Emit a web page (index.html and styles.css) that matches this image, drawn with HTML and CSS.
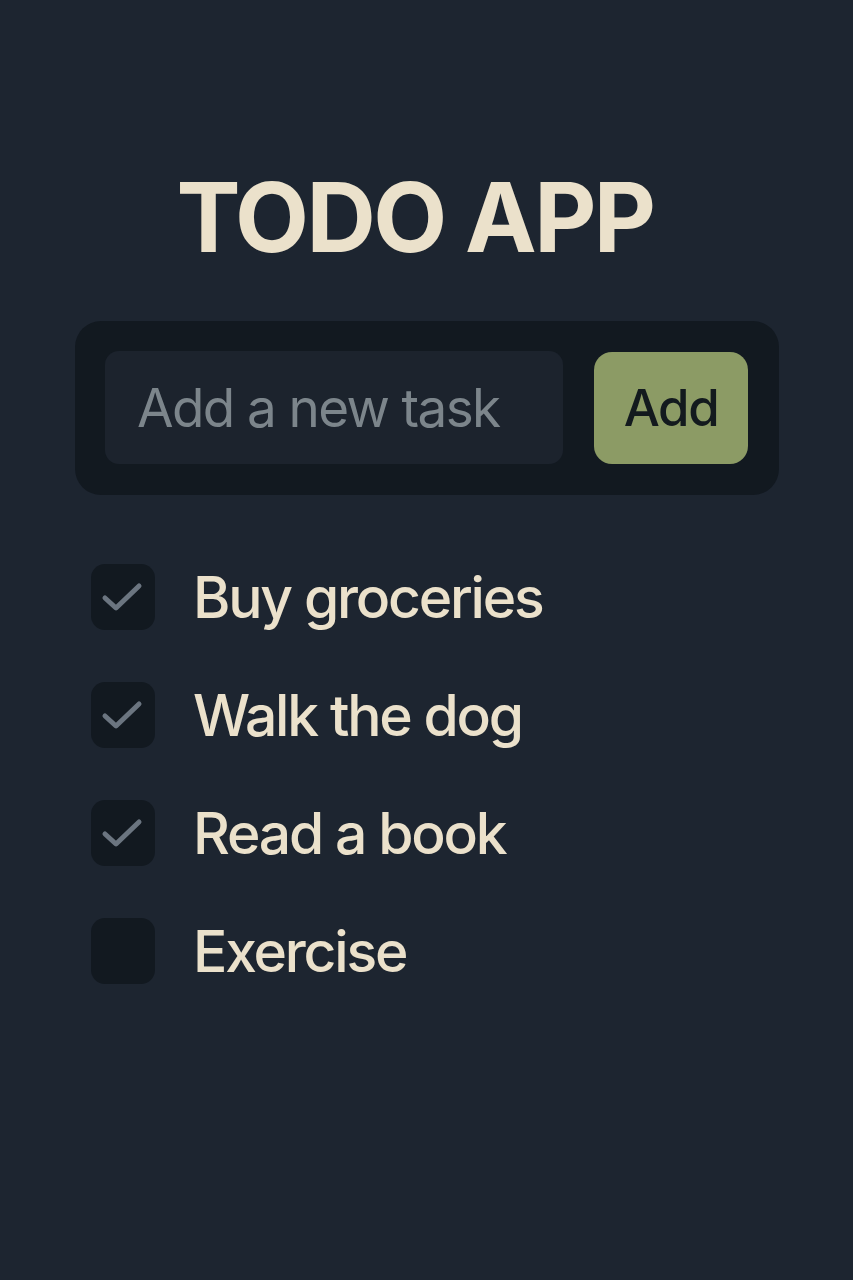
FILE: index.html
```html
<!DOCTYPE html>
<html>
<head>
<meta charset="utf-8">
<link rel="stylesheet" href="styles.css">
</head>
<body>
<main class="app">
  <h1 class="title">TODO APP</h1>
  <form class="composer">
    <div class="field">Add a new task</div>
    <button type="button" class="add">Add</button>
  </form>
  <ul class="tasks">
    <li class="task">
      <span class="box"><svg viewBox="0 0 64 64" width="64" height="64"><path d="M14 33 L25 43 L48 21" fill="none" stroke="#6b7580" stroke-width="5" stroke-linecap="round" stroke-linejoin="round"/></svg></span>
      <span class="label">Buy groceries</span>
    </li>
    <li class="task">
      <span class="box"><svg viewBox="0 0 64 64" width="64" height="64"><path d="M14 33 L25 43 L48 21" fill="none" stroke="#6b7580" stroke-width="5" stroke-linecap="round" stroke-linejoin="round"/></svg></span>
      <span class="label">Walk the dog</span>
    </li>
    <li class="task">
      <span class="box"><svg viewBox="0 0 64 64" width="64" height="64"><path d="M14 33 L25 43 L48 21" fill="none" stroke="#6b7580" stroke-width="5" stroke-linecap="round" stroke-linejoin="round"/></svg></span>
      <span class="label">Read a book</span>
    </li>
    <li class="task">
      <span class="box"></span>
      <span class="label">Exercise</span>
    </li>
  </ul>
</main>
</body>
</html>
```
FILE: styles.css
```css
html, body {
  margin: 0;
  padding: 0;
  background: #1d2530;
  height: 100%;
}
body {
  font-family: Inter, "Noto Sans", sans-serif;
  color: #ebe1cb;
}
.app {
  width: 704px;
  margin-left: 75px;
  padding-top: 160px;
}
.title {
  margin: 0 0 47px 0;
  padding-right: 24px;
  text-align: center;
  font-size: 96px;
  line-height: 114px;
  font-weight: 700;
  letter-spacing: -2.5px;
  color: #ebe1cb;
}
.composer {
  display: flex;
  align-items: center;
  gap: 31px;
  background: #121920;
  border-radius: 26px;
  padding: 30px 31px 31px 30px;
  margin: 0;
}
.field {
  flex: 1;
  height: 113px;
  box-sizing: border-box;
  background: #1c232d;
  border-radius: 14px;
  padding-left: 32px;
  display: flex;
  align-items: center;
  font-size: 53px;
  letter-spacing: -1.6px;
  color: #7c858b;
}
.add {
  width: 154px;
  height: 112px;
  border: 0;
  border-radius: 18px;
  background: #8c9b65;
  color: #131a1e;
  font-family: Inter, "Noto Sans", sans-serif;
  font-size: 51px;
  letter-spacing: -1.5px;
  font-weight: 500;
  padding: 0;
}
.tasks {
  list-style: none;
  margin: 70px 0 0 16px;
  padding: 0;
  display: flex;
  flex-direction: column;
  gap: 54px;
}
.task {
  display: flex;
  align-items: center;
  gap: 38px;
  height: 64px;
}
.box {
  width: 64px;
  height: 66px;
  border-radius: 14px;
  background: #121920;
  display: flex;
  align-items: center;
  justify-content: center;
  flex: none;
}
.label {
  font-size: 57px;
  font-weight: 500;
  letter-spacing: -2.2px;
  color: #ebe1cb;
  line-height: 1;
}
```
